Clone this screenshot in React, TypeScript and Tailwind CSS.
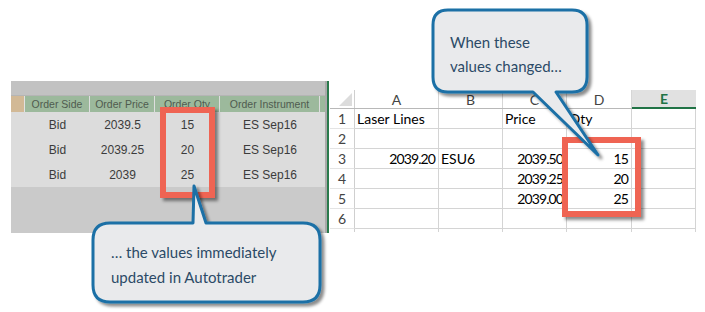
import React from "react";

const atCols = [
  { label: "Order Side", w: "w-[65px]" },
  { label: "Order Price", w: "w-[65px]" },
  { label: "Order Qty", w: "w-[65px]" },
  { label: "Order Instrument", w: "w-[100px]" },
];

const atRows = [
  ["Bid", "2039.5", "15", "ES Sep16"],
  ["Bid", "2039.25", "20", "ES Sep16"],
  ["Bid", "2039", "25", "ES Sep16"],
];

const xlCols = [
  { l: "A", w: "w-[84px]" },
  { l: "B", w: "w-[64px]" },
  { l: "C", w: "w-[64px]" },
  { l: "D", w: "w-[65px]" },
];

type Cell = { t?: string; right?: boolean; num?: boolean };
const xlRows: Cell[][] = [
  [{ t: "Laser Lines" }, {}, { t: "Price" }, { t: "Qty" }, {}],
  [{}, {}, {}, {}, {}],
  [{ t: "2039.20", right: true, num: true }, { t: "ESU6" }, { t: "2039.50", right: true, num: true }, { t: "15", right: true, num: true }, {}],
  [{}, {}, { t: "2039.25", right: true, num: true }, { t: "20", right: true, num: true }, {}],
  [{}, {}, { t: "2039.00", right: true, num: true }, { t: "25", right: true, num: true }, {}],
  [{}, {}, {}, {}, {}],
];
const xlW = ["w-[84px]", "w-[64px]", "w-[64px]", "w-[65px]", "w-[64px]"];

export default function App() {
  return (
    <div className="relative w-[705px] h-[312px] bg-white overflow-hidden">
      <div className="flex items-start pt-[81px] pl-[11px]">
        {/* Autotrader panel */}
        <div className="flex flex-col w-[314px] h-[152px] font-['Liberation_Sans',Arial,sans-serif]">
          <div className="h-[14px] bg-[#c2c2c2]" />
          <div className="flex h-[17px] bg-[#c9c9c9] border-t border-[#b5b5b5]">
            <div className="w-[14px] bg-[#d2b996] border-r border-[#e2e2e2]" />
            {atCols.map((c) => (
              <div
                key={c.label}
                className={`${c.w} shrink-0 bg-[#9cb99c] border-r border-[#dedede] flex items-center justify-center text-[10.5px] text-[#4f5b4f] leading-none`}
              >
                {c.label}
              </div>
            ))}
            <div className="flex-1 bg-[#9cb99c]" />
          </div>
          <div className="bg-[#dcdcdc] flex flex-col">
            {atRows.map((r, i) => (
              <div key={i} className="flex h-[25px] items-center text-[12px] text-[#3b3b3b]">
                <div className="w-[14px]" />
                {r.map((v, j) => (
                  <div key={j} className={`${atCols[j].w} shrink-0 text-center`}>
                    {v}
                  </div>
                ))}
              </div>
            ))}
          </div>
          <div className="flex-1 bg-[#cacaca]" />
        </div>
        <div className="w-[2px] h-[152px] bg-[#a9a9a9]" />
        <div className="w-[2px] h-[152px] bg-[#2a7a4c]" />
        <div className="w-[1px]" />

        {/* Excel */}
        <div className="mt-[9px] flex flex-col font-['Lato',sans-serif] text-[14px] text-black">
          <div className="flex h-[19px] border-b border-[#b8b8b8]">
            <div className="w-[25px] shrink-0 relative border-r border-[#cfcfcf]">
              <div className="absolute right-[2px] bottom-[2px] w-0 h-0 border-l-[13px] border-l-transparent border-b-[13px] border-b-[#dcdcdc]" />
            </div>
            {xlCols.map((c) => (
              <div
                key={c.l}
                className={`${c.w} shrink-0 border-r border-[#d6d6d6] flex items-center justify-center text-[#444] text-[14px]`}
              >
                {c.l}
              </div>
            ))}
            <div className="w-[64px] shrink-0 bg-[#e1e1e1] border-b-2 border-[#217346] -mb-[1px] flex items-center justify-center text-[#217346] font-bold text-[14px]">
              E
            </div>
          </div>
          {xlRows.map((row, i) => (
            <div key={i} className="flex h-[20px]">
              <div className="w-[25px] shrink-0 border-r border-[#cfcfcf] border-b border-b-[#e4e4e4] flex items-center justify-center text-[#444]">
                {i + 1}
              </div>
              {row.map((c, j) => (
                <div
                  key={j}
                  className={`${xlW[j]} shrink-0 border-r border-b border-[#d4d4d4] flex items-center whitespace-nowrap overflow-visible ${
                    c.right ? "justify-end pr-[3px]" : "justify-start pl-[2px]"
                  } ${c.num ? "tracking-[-0.9px]" : ""}`}
                >
                  {c.t ?? ""}
                </div>
              ))}
            </div>
          ))}
          <div className="flex h-[3px]">
            <div className="w-[25px] shrink-0 border-r border-[#cfcfcf]" />
            {xlW.map((w, j) => (
              <div key={j} className={`${w} shrink-0 border-r border-[#d4d4d4]`} />
            ))}
          </div>
        </div>
      </div>

      {/* Red highlight boxes */}
      <div className="absolute left-[160px] top-[107px] w-[55px] h-[91px] border-[6px] border-[#ef6453] shadow-[3px_3px_3px_rgba(0,0,0,0.45)]" />
      <div className="absolute left-[562px] top-[137px] w-[79px] h-[80px] border-[6px] border-[#ef6453] shadow-[3px_3px_3px_rgba(0,0,0,0.45)]" />

      {/* Callouts */}
      <svg className="absolute left-0 top-0 pointer-events-none" width="705" height="312">
        <defs>
          <filter id="sh" x="-20%" y="-20%" width="140%" height="140%">
            <feDropShadow dx="3" dy="3" stdDeviation="1.6" floodColor="#000" floodOpacity="0.45" />
          </filter>
        </defs>
        <path
          d="M 448 10 H 572 Q 587 10 587 25 V 77 Q 587 92 572 92 H 556 L 598 155 L 533 92 H 448 Q 433 92 433 77 V 25 Q 433 10 448 10 Z"
          fill="#e9eaec"
          stroke="#1b70a6"
          strokeWidth="3"
          strokeLinejoin="round"
          filter="url(#sh)"
        />
        <path
          d="M 110 223 H 193 L 194 186 L 206 223 H 303 Q 320 223 320 240 V 285 Q 320 302 303 302 H 110 Q 93 302 93 285 V 240 Q 93 223 110 223 Z"
          fill="#e9eaec"
          stroke="#1b70a6"
          strokeWidth="3"
          strokeLinejoin="round"
          filter="url(#sh)"
        />
      </svg>
      <div className="absolute left-[450px] top-[30px] font-['Lato',sans-serif] text-[15px] leading-[24px] text-[#2c4a67]">
        <div>When these</div>
        <div>values changed…</div>
      </div>
      <div className="absolute left-[111px] top-[240px] font-['Lato',sans-serif] text-[15px] leading-[25px] text-[#2c4a67]">
        <div>… the values immediately</div>
        <div>updated in Autotrader</div>
      </div>
    </div>
  );
}
